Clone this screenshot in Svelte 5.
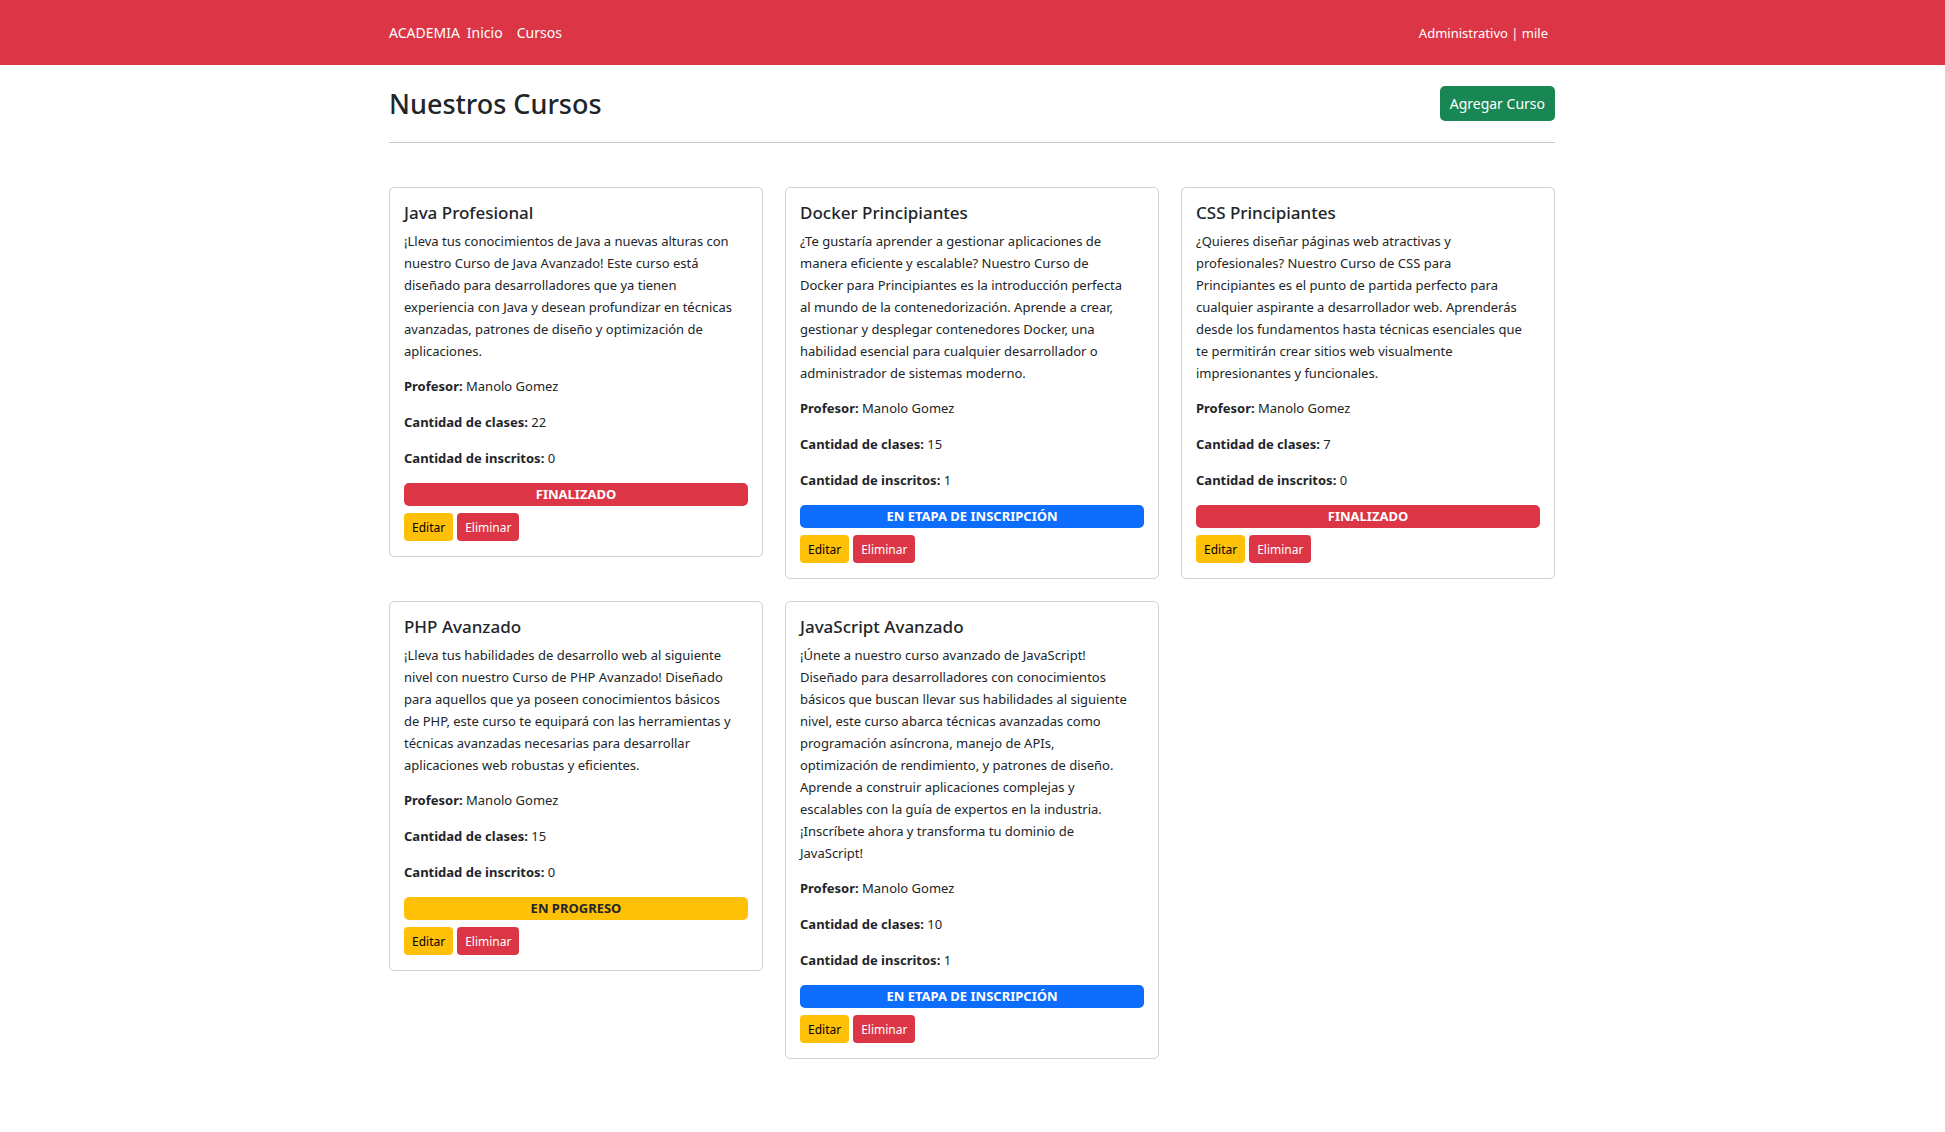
<script>
  const courses = [
    {
      title: 'Java Profesional',
      description: [
        '¡Lleva tus conocimientos de Java a nuevas alturas con',
        'nuestro Curso de Java Avanzado! Este curso está',
        'diseñado para desarrolladores que ya tienen',
        'experiencia con Java y desean profundizar en técnicas',
        'avanzadas, patrones de diseño y optimización de',
        'aplicaciones.',
      ],
      teacher: 'Manolo Gomez',
      lessons: 22,
      enrolled: 0,
      status: 'finished',
    },
    {
      title: 'Docker Principiantes',
      description: [
        '¿Te gustaría aprender a gestionar aplicaciones de',
        'manera eficiente y escalable? Nuestro Curso de',
        'Docker para Principiantes es la introducción perfecta',
        'al mundo de la contenedorización. Aprende a crear,',
        'gestionar y desplegar contenedores Docker, una',
        'habilidad esencial para cualquier desarrollador o',
        'administrador de sistemas moderno.',
      ],
      teacher: 'Manolo Gomez',
      lessons: 15,
      enrolled: 1,
      status: 'open',
    },
    {
      title: 'CSS Principiantes',
      description: [
        '¿Quieres diseñar páginas web atractivas y',
        'profesionales? Nuestro Curso de CSS para',
        'Principiantes es el punto de partida perfecto para',
        'cualquier aspirante a desarrollador web. Aprenderás',
        'desde los fundamentos hasta técnicas esenciales que',
        'te permitirán crear sitios web visualmente',
        'impresionantes y funcionales.',
      ],
      teacher: 'Manolo Gomez',
      lessons: 7,
      enrolled: 0,
      status: 'finished',
    },
    {
      title: 'PHP Avanzado',
      description: [
        '¡Lleva tus habilidades de desarrollo web al siguiente',
        'nivel con nuestro Curso de PHP Avanzado! Diseñado',
        'para aquellos que ya poseen conocimientos básicos',
        'de PHP, este curso te equipará con las herramientas y',
        'técnicas avanzadas necesarias para desarrollar',
        'aplicaciones web robustas y eficientes.',
      ],
      teacher: 'Manolo Gomez',
      lessons: 15,
      enrolled: 0,
      status: 'running',
    },
    {
      title: 'JavaScript Avanzado',
      description: [
        '¡Únete a nuestro curso avanzado de JavaScript!',
        'Diseñado para desarrolladores con conocimientos',
        'básicos que buscan llevar sus habilidades al siguiente',
        'nivel, este curso abarca técnicas avanzadas como',
        'programación asíncrona, manejo de APIs,',
        'optimización de rendimiento, y patrones de diseño.',
        'Aprende a construir aplicaciones complejas y',
        'escalables con la guía de expertos en la industria.',
        '¡Inscríbete ahora y transforma tu dominio de',
        'JavaScript!',
      ],
      teacher: 'Manolo Gomez',
      lessons: 10,
      enrolled: 1,
      status: 'open',
    },
  ];

  const statusLabels = {
    finished: 'FINALIZADO',
    open: 'EN ETAPA DE INSCRIPCIÓN',
    running: 'EN PROGRESO',
  };
</script>

<header class="navbar">
  <div class="container navbar-row">
    <nav class="links">
      <a class="brand" href="#inicio">ACADEMIA</a>
      <a class="link" href="#inicio">Inicio</a>
      <a class="link" href="#cursos">Cursos</a>
    </nav>
    <span class="user">Administrativo | mile</span>
  </div>
</header>

<main class="container">
  <div class="heading">
    <h1>Nuestros Cursos</h1>
    <button class="add" type="button">Agregar Curso</button>
  </div>

  <div class="grid">
    {#each courses as course}
      <article class="card">
        <h2>{course.title}</h2>
        <p class="description">{course.description.join('\n')}</p>
        <p class="fact"><strong>Profesor:</strong> {course.teacher}</p>
        <p class="fact"><strong>Cantidad de clases:</strong> {course.lessons}</p>
        <p class="fact"><strong>Cantidad de inscritos:</strong> {course.enrolled}</p>
        <div class="status {course.status}">{statusLabels[course.status]}</div>
        <div class="actions">
          <button class="small edit" type="button">Editar</button>
          <button class="small delete" type="button">Eliminar</button>
        </div>
      </article>
    {/each}
  </div>
</main>

<style>
  :global(body) {
    background: #fff;
    color: #212529;
    font-family: 'Noto Sans', 'Open Sans', sans-serif;
    font-size: 13px;
    line-height: 22px;
  }

  h1,
  h2,
  p {
    margin: 0;
  }

  button {
    border: 0;
    font-family: inherit;
    cursor: pointer;
  }

  .container {
    box-sizing: border-box;
    max-width: 1189px;
    margin: 0 auto;
    padding: 0 12px 0 11px;
  }

  .navbar {
    background: #dc3545;
    color: #fff;
  }

  .navbar-row {
    display: flex;
    justify-content: space-between;
    align-items: center;
    min-height: 65px;
  }

  .links {
    display: flex;
    font-size: 14px;
  }

  .links a {
    color: #fff;
    text-decoration: none;
  }

  .link {
    padding: 7px;
  }

  .brand {
    padding: 7px 0;
  }

  .user {
    padding: 0 7px;
  }

  .heading {
    display: flex;
    justify-content: space-between;
    align-items: center;
    padding: 21px 0;
    margin-bottom: 44px;
    border-bottom: 1px solid #c8c8c9;
  }

  h1 {
    font-size: 27px;
    font-weight: 500;
    line-height: 35px;
  }

  .add {
    height: 35px;
    padding: 0 10px;
    border-radius: 5px;
    background: #198754;
    color: #fff;
    font-size: 14px;
  }

  .grid {
    display: grid;
    grid-template-columns: repeat(3, minmax(0, 1fr));
    align-items: start;
    gap: 22px;
    padding-bottom: 22px;
  }

  .card {
    padding: 14px 14px 15px;
    border: 1px solid #d2d2d3;
    border-radius: 5px;
  }

  h2 {
    margin-bottom: 7px;
    font-size: 17px;
    font-weight: 500;
    line-height: 21px;
  }

  .description {
    margin-bottom: 13px;
    white-space: pre-line;
  }

  .fact {
    margin-bottom: 14px;
  }

  strong {
    font-weight: 700;
  }

  .status {
    margin-bottom: 7px;
    border-radius: 5px;
    font-weight: 700;
    line-height: 23px;
    text-align: center;
  }

  .finished {
    background: #dc3545;
    color: #fff;
  }

  .open {
    background: #0d6efd;
    color: #fff;
  }

  .running {
    background: #ffc107;
  }

  .actions {
    display: flex;
    gap: 4px;
  }

  .small {
    height: 28px;
    padding: 0 8px;
    border-radius: 4px;
    font-size: 12px;
  }

  .edit {
    background: #ffc107;
    color: #000;
  }

  .delete {
    background: #dc3545;
    color: #fff;
  }
</style>
